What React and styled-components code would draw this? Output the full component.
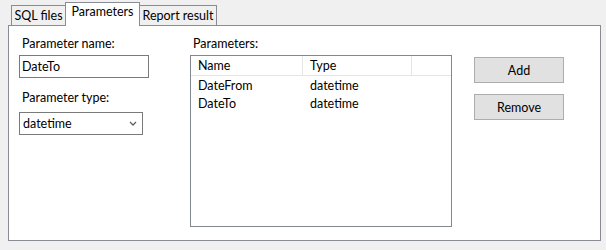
import React from 'react';
import styled, {createGlobalStyle} from "styled-components";

const GlobalStyle = createGlobalStyle`
  html, body {
    margin: 0;
    padding: 0;
    background: #f0f0f0;
  }
  body {
    font-family: Lato, "Segoe UI", sans-serif;
    font-size: 12.5px;
    color: #000;
  }
`;

// widths of the tab headers, as the window draws them
const tabs = [
  {title: 'SQL files', width: 55},
  {title: 'Parameters', width: 75},
  {title: 'Report result', width: 78},
];
const params = [
  {name: 'DateFrom', type: 'datetime'},
  {name: 'DateTo', type: 'datetime'},
];

const App = () => {
  return (
    <Window>
      <GlobalStyle />
      <TabStrip>
        {tabs.map((t) => (
          <Tab key={t.title} width={t.width} selected={t.title === 'Parameters'}>{t.title}</Tab>
        ))}
      </TabStrip>
      <Panel>
        <Column>
          <Label>Parameter name:</Label>
          <TextBox value="DateTo" readOnly />
          <Label gap={12}>Parameter type:</Label>
          <Select>
            <span>datetime</span>
            <svg width="8" height="5" viewBox="0 0 8 5">
              <path d="M1 1 L4 4 L7 1" fill="none" stroke="#606060" strokeWidth="1.3" />
            </svg>
          </Select>
        </Column>
        <Column>
          <Label>Parameters:</Label>
          <ListView>
            <Header>
              <HeaderCell width={112}>Name</HeaderCell>
              <HeaderCell width={109}>Type</HeaderCell>
              <HeaderCell last />
            </Header>
            {params.map((p) => (
              <Row key={p.name}>
                <Cell width={112}>{p.name}</Cell>
                <Cell width={109}>{p.type}</Cell>
              </Row>
            ))}
          </ListView>
        </Column>
        <Buttons>
          <Button>Add</Button>
          <Button>Remove</Button>
        </Buttons>
      </Panel>
    </Window>
  );
};

const Window = styled.div`
  padding: 2px 0 0 8px;
`;

const TabStrip = styled.div`
  display: flex;
  align-items: flex-end;
  height: 23px;
  padding-left: 3px;
`;

const Tab = styled.div`
  position: relative;
  box-sizing: border-box;
  width: ${p => p.width}px;
  height: ${p => p.selected ? '24px' : '20px'};
  margin-bottom: ${p => p.selected ? '-1px' : '0'};
  margin-left: -1px;
  padding-top: ${p => p.selected ? '1px' : '0'};
  z-index: ${p => p.selected ? 1 : 0};
  display: flex;
  justify-content: center;
  align-items: ${p => p.selected ? 'flex-start' : 'center'};
  border: 1px solid #898c95;
  border-bottom: none;
  background: ${p => p.selected ? '#fff' : '#f0f0f0'};
  white-space: nowrap;
  &:first-child{
    margin-left: 0;
  }
`;

const Panel = styled.div`
  box-sizing: border-box;
  width: 593px;
  height: 216px;
  border: 1px solid #898c95;
  background: #fff;
  padding: 10px 0 0 10px;
  display: grid;
  grid-template-columns: 171px 284px 90px;
  align-items: start;
`;

const Column = styled.div`
  display: flex;
  flex-direction: column;
  align-items: flex-start;
`;

const Label = styled.div`
  line-height: 15px;
  padding-left: 3px;
  margin-top: ${p => p.gap || 0}px;
  margin-bottom: 4px;
`;

const TextBox = styled.input`
  box-sizing: border-box;
  width: 130px;
  height: 23px;
  border: 1px solid #7a7a7a;
  padding: 0 2px;
  margin: 0;
  font: inherit;
  color: #000;
  outline: none;
`;

const Select = styled.div`
  box-sizing: border-box;
  width: 124px;
  height: 23px;
  border: 1px solid #7a7a7a;
  background: #fff;
  display: flex;
  align-items: center;
  justify-content: space-between;
  padding: 0 5px 0 3px;
  margin-top: 3px;
`;

const ListView = styled.div`
  box-sizing: border-box;
  width: 262px;
  height: 172px;
  border: 1px solid #828790;
  background: #fff;
`;

const Header = styled.div`
  display: flex;
  height: 19px;
  border-bottom: 1px solid #e5e5e5;
`;

const HeaderCell = styled.div`
  box-sizing: border-box;
  ${p => p.last ? 'flex: 1;' : `width: ${p.width}px;`}
  border-right: ${p => p.last ? 'none' : '1px solid #e5e5e5'};
  padding-left: 7px;
  display: flex;
  align-items: center;
`;

const Row = styled.div`
  display: flex;
  height: 18px;
  align-items: center;
`;

const Cell = styled.div`
  box-sizing: border-box;
  width: ${p => p.width}px;
  padding-left: 7px;
`;

const Buttons = styled.div`
  display: flex;
  flex-direction: column;
  gap: 11px;
  padding-top: 21px;
`;

const Button = styled.div`
  box-sizing: border-box;
  width: 90px;
  height: 26px;
  border: 1px solid #adadad;
  background: #e1e1e1;
  display: flex;
  align-items: center;
  justify-content: center;
`;

export default App;
